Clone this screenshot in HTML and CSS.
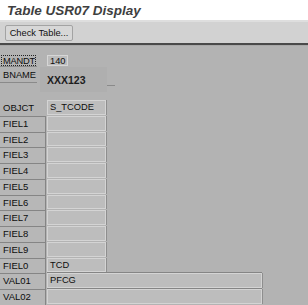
FILE: index.html
```html
<!DOCTYPE html>
<html>
<head>
<meta charset="utf-8">
<link rel="stylesheet" href="styles.css">
</head>
<body>
<div class="title">Table USR07 Display</div>
<div class="toolbar"><button class="btn">Check Table...</button></div>
<div class="content">
  <div class="hrow hrow1">
    <div class="hlabel"><span class="focus">MANDT</span></div>
    <div class="hfield">140</div>
  </div>
  <div class="hrow hrow2">
    <div class="hlabel hlabel2">BNAME</div>
    <div class="hvalue">XXX123</div>
    <div class="hmark"></div>
  </div>
  <div class="grid">
    <div class="row"><div class="lbl first">OBJCT</div><div class="fld">S_TCODE</div></div>
    <div class="row"><div class="lbl">FIEL1</div><div class="fld"></div></div>
    <div class="row"><div class="lbl">FIEL2</div><div class="fld"></div></div>
    <div class="row"><div class="lbl">FIEL3</div><div class="fld"></div></div>
    <div class="row"><div class="lbl">FIEL4</div><div class="fld"></div></div>
    <div class="row"><div class="lbl">FIEL5</div><div class="fld"></div></div>
    <div class="row"><div class="lbl">FIEL6</div><div class="fld"></div></div>
    <div class="row"><div class="lbl">FIEL7</div><div class="fld"></div></div>
    <div class="row"><div class="lbl">FIEL8</div><div class="fld"></div></div>
    <div class="row"><div class="lbl">FIEL9</div><div class="fld"></div></div>
    <div class="row"><div class="lbl">FIEL0</div><div class="fld">TCD</div></div>
    <div class="row"><div class="lbl">VAL01</div><div class="fld wide">PFCG</div></div>
    <div class="row"><div class="lbl">VAL02</div><div class="fld wide"></div></div>
  </div>
</div>
</body>
</html>
```
FILE: styles.css
```css
html, body {
  margin: 0;
  padding: 0;
}
body {
  width: 308px;
  height: 305px;
  overflow: hidden;
  background: #b3b3b3;
  font-family: "Liberation Sans", Arial, sans-serif;
  color: #0d0d0d;
}
.title {
  height: 22px;
  background: #ffffff;
  border-bottom: 2px solid #dedede;
  box-sizing: border-box;
  padding-left: 7px;
  font-size: 13.5px;
  font-weight: bold;
  font-style: italic;
  color: #3f3f3f;
  line-height: 21px;
}
.toolbar {
  height: 23px;
  box-sizing: border-box;
  background: #d2d2d2;
  border-bottom: 2px solid #4a4a4a;
  padding: 3px 0 0 5px;
}
.btn {
  display: block;
  margin: 0;
  width: 68px;
  height: 16px;
  padding: 0;
  border: 1px solid #a3a3a3;
  border-radius: 2px;
  background: #d7d7d7;
  font-family: "Liberation Sans", Arial, sans-serif;
  font-size: 9.3px;
  color: #111;
  text-align: center;
  line-height: 14px;
}
.content {
  padding-top: 9px;
  border-top: 1px solid #a8a8a8;
}
.hrow {
  display: flex;
  align-items: flex-start;
}
.hrow1 {
  height: 12px;
}
.hlabel {
  width: 37px;
  height: 12px;
  box-sizing: border-box;
  border-bottom: 1px solid #8a8a8a;
  font-size: 9.3px;
}
.focus {
  display: block;
  margin: 0 0 0 1px;
  width: 35px;
  height: 11px;
  box-sizing: border-box;
  border: 1px dotted #222;
  line-height: 10px;
  padding-left: 1px;
  letter-spacing: -0.2px;
  white-space: nowrap;
  overflow: hidden;
}
.hfield {
  margin-left: 10px;
  width: 21px;
  height: 11px;
  box-sizing: border-box;
  border: 1px solid #d6d6d6;
  background: #bcbcbc;
  font-size: 9.3px;
  line-height: 10px;
  padding-left: 2px;
}
.hrow2 {
  height: 25px;
}
.hlabel2 {
  height: 16px;
  line-height: 17px;
  padding-left: 3px;
}
.hvalue {
  margin-left: 3px;
  width: 67px;
  height: 25px;
  box-sizing: border-box;
  background: #afafaf;
  padding-left: 7px;
  font-size: 10.5px;
  font-weight: bold;
  line-height: 26px;
  color: #1d1d1d;
}
.hmark {
  margin-top: 18px;
  width: 8px;
  height: 1px;
  background: #8a8a8a;
}
.grid {
  margin-top: 8px;
  display: flex;
  flex-direction: column;
}
.row {
  display: flex;
  height: 15.75px;
}
.lbl {
  width: 46px;
  box-sizing: border-box;
  border-top: 1px solid #858585;
  border-right: 1px solid #858585;
  background: #b7b7b7;
  padding-left: 3px;
  font-size: 9.5px;
  line-height: 14px;
}
.lbl.first {
  border-top: 1px solid transparent;
  border-right: 1px solid transparent;
  background: transparent;
}
.fld {
  margin-left: 1px;
  width: 59px;
  height: 14.75px;
  box-sizing: border-box;
  border: 1px solid #d4d4d4;
  background: #bdbdbd;
  box-shadow: 1px 0 0 #8e8e8e;
  padding-left: 2px;
  font-size: 9.3px;
  line-height: 12px;
}
.fld.wide {
  width: 215px;
  box-shadow: 1px 0 0 #8e8e8e, 0 -1px 0 #858585;
}
```
